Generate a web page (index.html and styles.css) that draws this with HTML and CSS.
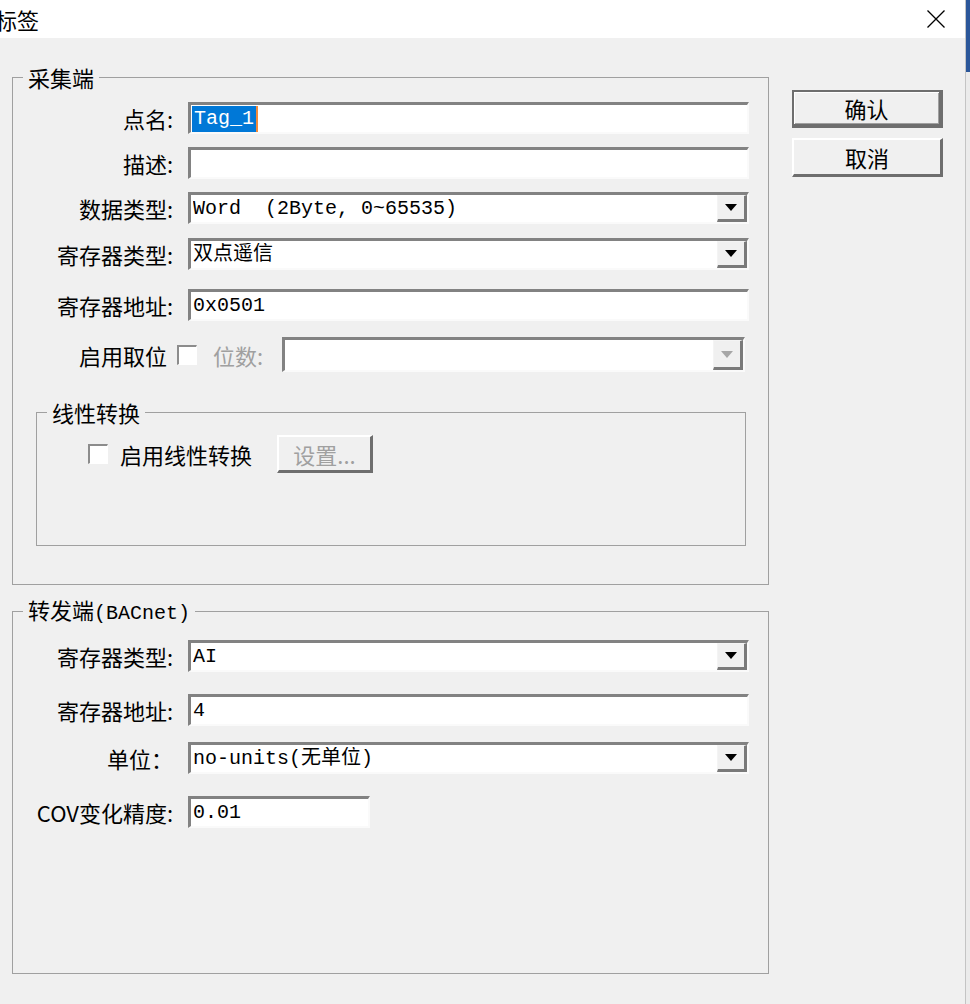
FILE: index.html
```html
<!DOCTYPE html>
<html lang="zh-CN">
<head>
  <meta charset="UTF-8" />
  <meta name="viewport" content="width=device-width, initial-scale=1.0"/>
  <title>标签</title>
  <link rel="stylesheet" href="styles.css">
</head>
<body>
  <div class="screen">
    <div class="dialog">
      <div class="titlebar">
        <span class="title">标签</span>
        <svg class="close" width="18" height="18" viewBox="0 0 18 18">
          <path d="M0.5 0.5L17.5 17.5M17.5 0.5L0.5 17.5" stroke="#000" stroke-width="1.3" fill="none"/>
        </svg>
      </div>

      <div class="dialog-body">
        <div class="main-col">
          <!-- 采集端 -->
          <fieldset class="group group-source">
            <legend>采集端</legend>
            <div class="row">
              <label class="label">点名:</label>
              <div class="edit edit-focus"><span class="sel">Tag_1</span></div>
            </div>
            <div class="row">
              <label class="label">描述:</label>
              <input class="edit" value="">
            </div>
            <div class="row">
              <label class="label">数据类型:</label>
              <div class="combo">
                <select><option>Word&nbsp;&nbsp;(2Byte, 0~65535)</option></select>
                <span class="combo-btn"></span>
              </div>
            </div>
            <div class="row mt-14">
              <label class="label">寄存器类型:</label>
              <div class="combo">
                <select><option>双点遥信</option></select>
                <span class="combo-btn"></span>
              </div>
            </div>
            <div class="row mt-19">
              <label class="label">寄存器地址:</label>
              <input class="edit" value="0x0501">
            </div>
            <div class="row row-bits mt-16">
              <label class="label">启用取位</label>
              <span class="check"></span>
              <span class="bits-label">位数:</span>
              <div class="combo combo-tall disabled">
                <select disabled><option></option></select>
                <span class="combo-btn"></span>
              </div>
            </div>

            <fieldset class="group group-linear">
              <legend>线性转换</legend>
              <div class="row row-linear">
                <span class="check"></span>
                <span class="check-label">启用线性转换</span>
                <button class="btn btn-settings" disabled>设置...</button>
              </div>
            </fieldset>
          </fieldset>

          <!-- 转发端 -->
          <fieldset class="group group-forward">
            <legend>转发端<span class="mono">(BACnet)</span></legend>
            <div class="row">
              <label class="label">寄存器类型:</label>
              <div class="combo">
                <select><option>AI</option></select>
                <span class="combo-btn"></span>
              </div>
            </div>
            <div class="row mt-22">
              <label class="label">寄存器地址:</label>
              <input class="edit" value="4">
            </div>
            <div class="row mt-16">
              <label class="label">单位：</label>
              <div class="combo">
                <select><option>no-units(无单位)</option></select>
                <span class="combo-btn"></span>
              </div>
            </div>
            <div class="row mt-22">
              <label class="label">COV变化精度:</label>
              <input class="edit edit-short" value="0.01">
            </div>
          </fieldset>
        </div>

        <div class="side-col">
          <button class="btn btn-default">确认</button>
          <button class="btn btn-cancel">取消</button>
        </div>
      </div>
    </div>
    <div class="backdrop"></div>
  </div>
</body>
</html>
```

FILE: styles.css
```css
* {
  box-sizing: border-box;
}

body {
  margin: 0;
  background: #f0f0f0;
  font-family: "Noto Sans CJK SC", sans-serif;
  font-size: 22px;
  color: #000;
  overflow: hidden;
}

.screen {
  display: flex;
  width: 970px;
  height: 1004px;
}

.dialog {
  width: 965px;
  display: flex;
  flex-direction: column;
}

.titlebar {
  height: 38px;
  flex: none;
  background: #fff;
  display: flex;
  align-items: center;
  justify-content: space-between;
  padding-right: 20px;
}

.title {
  margin-left: -5px;
  line-height: 34px;
}

.close {
  display: block;
}

.dialog-body {
  flex: 1;
  display: flex;
  padding: 28px 0 0 12px;
}

.main-col {
  width: 757px;
  flex: none;
}

.side-col {
  margin: 24px 0 0 23px;
  display: flex;
  flex-direction: column;
  gap: 10px;
}

/* group boxes */
.group {
  margin: 0;
  min-width: 0;
  border: 1px solid #a0a0a0;
  padding: 14px 19px 0 0;
}

.group legend {
  margin-left: 10px;
  padding: 0 5px;
  line-height: 22px;
}

.group-source {
  height: 519px;
}

.group-linear {
  margin: 29px 0 0 23px;
  width: 710px;
  height: 145px;
  padding: 12px 0 0 0;
}

.row-linear {
  margin-left: 51px;
}

.group-forward {
  margin-top: 13px;
  height: 376px;
  padding-top: 15px;
}

.mono {
  font-family: "Liberation Mono", monospace;
  font-size: 20px;
}

/* rows */
.row {
  display: flex;
  align-items: center;
}

.row + .row {
  margin-top: 13px;
}

.row.mt-14 { margin-top: 14px; }
.row.mt-16 { margin-top: 16px; }
.row.mt-19 { margin-top: 19px; }
.row.mt-22 { margin-top: 22px; }

.label {
  width: 160px;
  flex: none;
  margin-right: 15px;
  text-align: right;
  white-space: nowrap;
  line-height: 32px;
}

/* edit controls */
.edit,
.combo {
  flex: 1;
  min-width: 0;
  height: 32px;
  border-style: solid;
  border-width: 3px 2px 2px 3px;
  border-color: #828282 #fafafa #fafafa #828282;
  background: #fff;
}

.edit {
  font-family: "Liberation Mono", "Noto Sans CJK SC", monospace;
  font-size: 20px;
  color: #000;
  padding: 0 0 0 2px;
  outline: none;
}

.edit-focus {
  display: flex;
  align-items: stretch;
  padding: 1px 0 0 1px;
}

.sel {
  background: #0078d7;
  color: #fff;
  padding: 0 2px 0 2px;
  line-height: 26px;
  border-right: 2px solid #f08a3c;
}

.edit-short {
  flex: none;
  width: 182px;
}

.combo {
  display: flex;
}

.combo select {
  flex: 1;
  min-width: 0;
  appearance: none;
  border: 0;
  background: transparent;
  font-family: "Liberation Mono", "Noto Sans CJK SC", monospace;
  font-size: 20px;
  color: #000;
  padding: 0 0 0 2px;
  outline: none;
}

.combo-btn {
  width: 30px;
  flex: none;
  background: #f0f0f0;
  border-style: solid;
  border-width: 1px 3px 3px 1px;
  border-color: #f4f4f4 #7a7a7a #7a7a7a #f4f4f4;
  display: flex;
  align-items: center;
  justify-content: center;
}

.combo-btn::after {
  content: "";
  border-left: 6px solid transparent;
  border-right: 6px solid transparent;
  border-top: 7px solid #000;
}

.combo-tall {
  height: 35px;
}

.combo.disabled .combo-btn::after {
  border-top-color: #a6a6a6;
}

/* checkbox */
.check {
  width: 20px;
  height: 20px;
  flex: none;
  border-style: solid;
  border-width: 2px 1px 1px 2px;
  border-color: #8c8c8c #fff #fff #8c8c8c;
  background: #fff;
}

.row-bits .label {
  width: 154px;
  margin-right: 10px;
}

.bits-label {
  margin: 0 19px 0 16px;
  color: #a0a0a0;
  white-space: nowrap;
}

.row-bits .combo {
  margin-right: 4px;
}

.check-label {
  margin: 0 25px 0 12px;
  white-space: nowrap;
}

/* push buttons */
.btn {
  font-family: inherit;
  font-size: 22px;
  color: #000;
  background: #f0f0f0;
  padding: 0;
  border-style: solid;
  border-width: 2px 3px 3px 2px;
  border-color: #fff #6e6e6e #6e6e6e #fff;
}

.btn-settings {
  width: 96px;
  height: 38px;
  color: #a0a0a0;
}

.side-col .btn {
  width: 151px;
}

.btn-default {
  height: 38px;
  border-width: 2px 4px 4px 2px;
  border-color: #6e6e6e;
  box-shadow: inset 1px 1px #fff, inset -1px -1px #a0a0a0;
}

.btn-cancel {
  height: 39px;
}

/* window behind the dialog */
.backdrop {
  width: 5px;
  flex: none;
  border-left: 1px solid #c4c4c4;
  background: linear-gradient(#2b579a 0 72px, #ebebeb 72px);
}
```
